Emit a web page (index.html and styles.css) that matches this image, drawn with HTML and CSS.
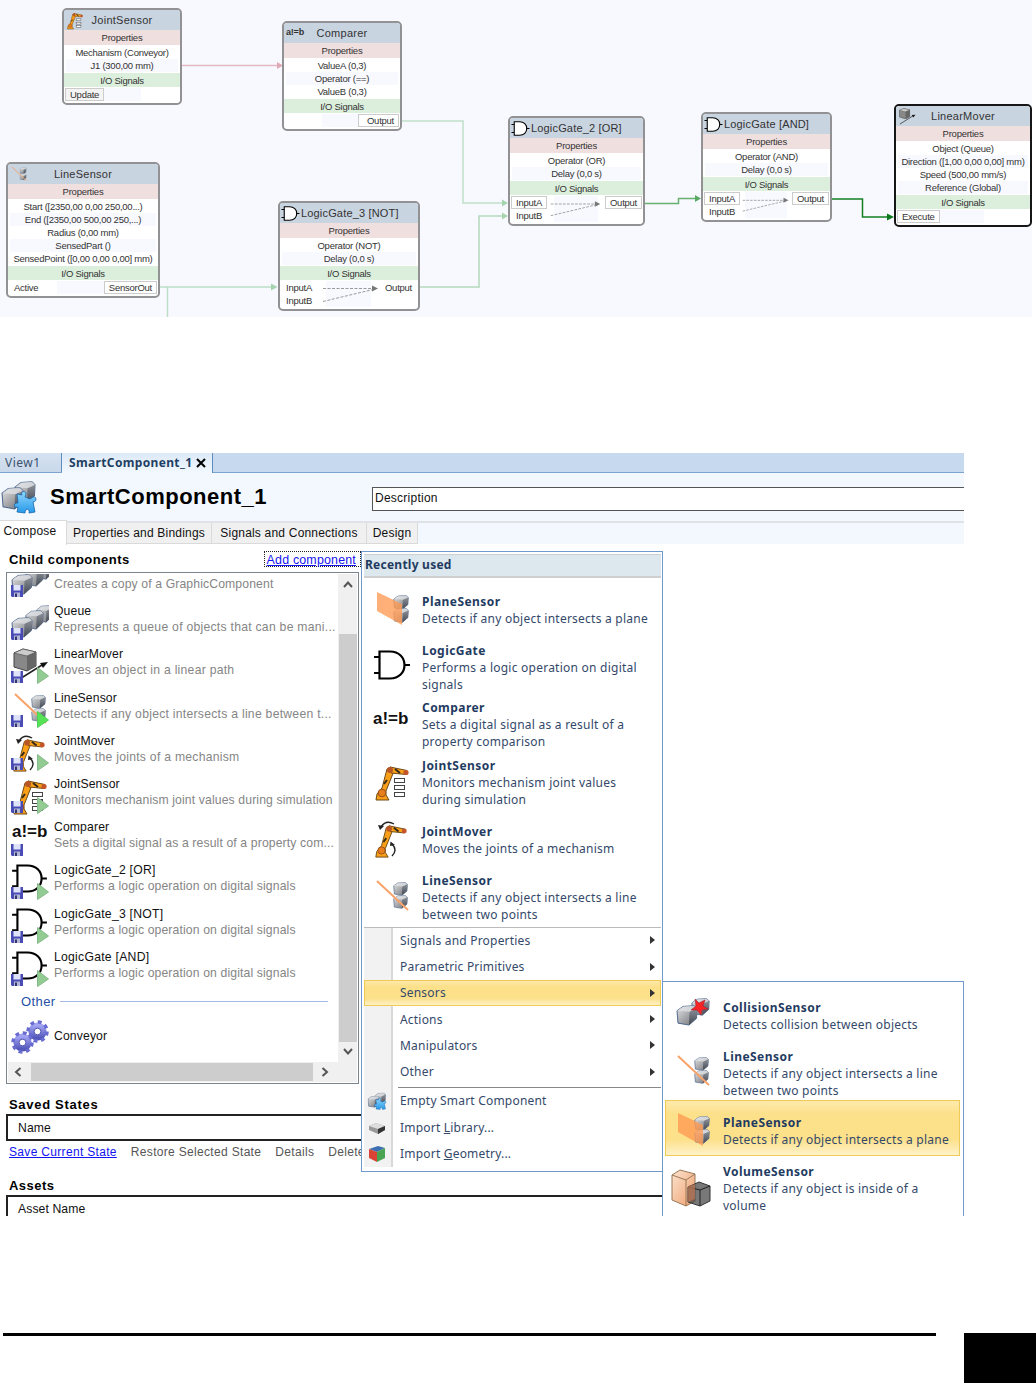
FILE: index.html
```html
<!DOCTYPE html>
<html lang="en">
<head>
    <meta charset="UTF-8" />
    <meta name="viewport" content="width=device-width, initial-scale=1.0"/>
    <title>SmartComponent_1</title>
    <link rel="stylesheet" href="styles.css">
</head>
<body>

<!-- Icon library -->
<svg class="defs" width="0" height="0">
    <defs>
        <linearGradient id="g-front" x1="0" y1="0" x2="1" y2="1"><stop offset="0" stop-color="#e4e4e5"/><stop offset="1" stop-color="#6b6d72"/></linearGradient>
        <linearGradient id="g-side" x1="0" y1="0" x2="0" y2="1"><stop offset="0" stop-color="#8c9098"/><stop offset="1" stop-color="#434a55"/></linearGradient>
        <linearGradient id="g-puzzle" x1="0" y1="0" x2="0" y2="1"><stop offset="0" stop-color="#8fd6fb"/><stop offset="1" stop-color="#2699ea"/></linearGradient>
        <linearGradient id="g-gear" x1="0" y1="0" x2="0" y2="1"><stop offset="0" stop-color="#a3a5f3"/><stop offset="1" stop-color="#5558bb"/></linearGradient>
        <linearGradient id="g-peach" x1="0" y1="0" x2="1" y2="1"><stop offset="0" stop-color="#fbe3d0"/><stop offset="1" stop-color="#ef9f6c"/></linearGradient>
        <symbol id="box" viewBox="0 0 22 22" preserveAspectRatio="none">
            <path d="M1 6 L7 1.5 L18 .8 L21 3.5 L20.5 14 L13 21 L2 19Z" fill="url(#g-front)" stroke="#4c658c" stroke-width="1"/>
            <path d="M13.5 7 L21 3.5 L20.5 14 L13 21Z" fill="url(#g-side)"/>
            <path d="M1 6 L7 1.5 L18 .8 L21 3.5 L13.5 7Z" fill="#dfe1e4" opacity=".75"/>
        </symbol>
        <symbol id="floppy" viewBox="0 0 12 12">
            <path d="M0 0H12V12H1L0 11Z" fill="#4a4cb5"/>
            <rect x="2.5" y="0" width="7" height="5.5" fill="#dfe3fa"/>
            <rect x="3" y="7.5" width="6" height="4.5" fill="#b4b8d6"/>
            <rect x="4" y="8.5" width="2" height="3.5" fill="#33356f"/>
        </symbol>
        <symbol id="play" viewBox="0 0 12 17"><path d="M.5 .5 L11.5 9 L.5 16.5Z" fill="#93cc93" stroke="#86b98a"/></symbol>
        <symbol id="arm" viewBox="0 0 38 38">
            <path d="M4 30 L9 24 L14 5 L18 3 L21 7 L13 27 L13 31 L16 36 H3Z" fill="#f99f18" stroke="#6e4a16" stroke-width="1"/>
            <path d="M17 3 L34 6.5 L33 10.5 L18 9Z" fill="#f99f18" stroke="#6e4a16" stroke-width="1"/>
            <path d="M22 5 L27 9 M11 20 L14 16" stroke="#332a1c" stroke-width="2"/>
            <circle cx="17" cy="6" r="3" fill="#b85725"/><circle cx="33" cy="8.5" r="2.6" fill="#c4552a"/><circle cx="9" cy="29" r="3.8" fill="#e67f1c" stroke="#9b4e1d"/>
        </symbol>
        <symbol id="joint-sensor" viewBox="0 0 38 38">
            <use href="#arm" width="38" height="38"/>
            <g fill="#fff" stroke="#444" stroke-width="1"><rect x="21.500" y="14.500" width="10" height="4"/><rect x="21.500" y="21.500" width="10" height="4"/><rect x="21.500" y="28.500" width="10" height="4"/></g>
        </symbol>
        <symbol id="joint-mover" viewBox="0 0 38 38">
            <use href="#arm" y="2" width="36" height="36"/>
            <g fill="none" stroke="#222" stroke-width="1.400"><path d="M21 3 Q13 -1.500 8 6"/><path d="M19 35 Q25 29 19 23"/></g>
            <path d="M5 4 L11 5 L7 9Z M17 25 L17.500 20.500 L22 24Z" fill="#222"/>
        </symbol>
        <symbol id="gate" viewBox="0 0 38 30">
            <path d="M6.500 1.500 H17 C26 1.500 31.500 7.500 31.500 15 C31.500 22.500 26 28.500 17 28.500 H6.500Z" fill="#fff" stroke="#000" stroke-width="2.200"/>
            <path d="M1 7H6 M1 23H6 M31 15H37" stroke="#000" stroke-width="2.200"/>
        </symbol>
        <symbol id="line-sensor" viewBox="0 0 38 38">
            <use href="#box" x="20" y="3" width="15" height="14"/><use href="#box" x="20" y="16" width="15" height="14"/>
            <path d="M4 2 L35 31" stroke="#f8a369" stroke-width="2"/>
        </symbol>
        <symbol id="plane-sensor" viewBox="0 0 38 38">
            <use href="#box" x="20" y="4" width="16" height="15"/><use href="#box" x="20" y="17" width="16" height="15"/>
            <path d="M4 1 L29 13 V34 L4 20Z" fill="#ff9a52" opacity=".78"/>
        </symbol>
        <symbol id="cube" viewBox="0 0 24 24">
            <path d="M1 5 L10 1 L23 4 V18 L14 23 L1 19Z" fill="#888" stroke="#444"/>
            <path d="M1 5 L10 1 L23 4 L14 8Z" fill="#ccc" stroke="#555" stroke-width=".7"/>
            <path d="M14 8 L23 4 V18 L14 23Z" fill="#666"/>
        </symbol>
        <symbol id="linear-mover" viewBox="0 0 38 38">
            <use href="#cube" x="2" y="0" width="24" height="24"/>
            <path d="M4 34 L31 17" stroke="#222" stroke-width="1.500"/><path d="M37 14 L29 15 L32 20Z" fill="#111"/>
        </symbol>
        <symbol id="queue" viewBox="0 0 38 38">
            <use href="#box" x="25" y="0" width="17" height="18"/><use href="#box" x="14" y="5" width="19" height="20"/><use href="#box" x="0" y="12" width="22" height="21"/>
        </symbol>
        <symbol id="smart" viewBox="0 0 38 34">
            <use href="#box" x="14" y="1" width="22" height="23"/><use href="#box" x="1" y="7" width="23" height="23"/>
            <path d="M17 14 L22 15 C20 11 26 10 26 14 L25 17 L30 19 L33 17 C37 16 37 22 33 22 L35 32 L29 33 C30 28 25 28 25 33 L17 32 L18 27 C13 29 13 22 18 23Z" fill="url(#g-puzzle)" stroke="#1766ab" stroke-width=".8"/>
        </symbol>
        <symbol id="gear" viewBox="-12 -12 24 24">
            <circle r="6.500" fill="none" stroke="url(#g-gear)" stroke-width="6"/>
            <circle r="10" fill="none" stroke="#686bcf" stroke-width="3.500" stroke-dasharray="4 3.850"/>
            <circle r="3.500" fill="none" stroke="#5356b2" stroke-width="1"/>
        </symbol>
        <symbol id="collision" viewBox="0 0 38 38">
            <use href="#box" x="17" y="1" width="19" height="18"/><use href="#box" x="2" y="8" width="22" height="21"/>
            <path d="M21 2 L25 6 L31 3 L29 9 L34 12 L28 13 L27 18 L23 13 L17 13 L22 9Z" fill="#f72324" stroke="#9d2330" stroke-width=".6"/>
        </symbol>
        <symbol id="volume" viewBox="0 0 40 40">
            <path d="M1 6 L9 1 L24 5 V32 L15 37 L1 31Z" fill="url(#g-peach)" stroke="#9a7957"/>
            <path d="M1 6 L15 11 L24 5 M15 11 V37" fill="none" stroke="#9a7957"/>
            <path d="M17 18 L28 13 L39 17 V32 L29 37 L17 33Z" fill="#444" fill-opacity=".72" stroke="#333"/>
            <path d="M17 18 L29 21 L39 17 M29 21 V37" fill="none" stroke="#222"/>
            <path d="M17 17 L24 15 V30 L17 33Z" fill="#b87858" opacity=".75"/>
        </symbol>
    </defs>
</svg>

<div class="diagram">
    <svg class="wires" width="1032" height="317">
        <g fill="none" stroke-width="1.500">
            <path d="M182 65.500H278" stroke="#e3b9c2"/>
            <path d="M402 121H463V203H504" stroke="#bfdfc8"/>
            <path d="M160 287H273 M167.500 287V317" stroke="#bcdec6"/>
            <path d="M420 287H479V216H504" stroke="#b4d9bc"/>
            <path d="M645 203.500H678.500V198.500H697" stroke="#67b070"/>
            <path d="M832 199H862.500V217H890" stroke="#148023"/>
        </g>
        <path d="M277 62L283 65.500L277 69Z" fill="#dfaab5"/>
        <path d="M271 283.500L277.500 287L271 290.500Z" fill="#a6d4af"/>
        <path d="M502 199.500L508 203L502 206.500Z M502 212.500L508 216L502 219.500Z" fill="#a6d4af"/>
        <path d="M695 195L701 198.500L695 202Z" fill="#5aaa64"/>
        <path d="M887 213.500L894 217L887 220.500Z" fill="#0d7a1c"/>
    </svg>

    <div class="node n-joint">
        <div class="node-title"><svg class="node-icon"><use href="#joint-sensor"/></svg>JointSensor</div>
        <div class="node-sub props">Properties</div>
        <div class="node-rows"><p>Mechanism (Conveyor)</p><p>J1 (300,00 mm)</p></div>
        <div class="node-sub io">I/O Signals</div>
        <div class="ports"><span class="port boxed gray">Update</span></div>
    </div>
    <div class="node n-comparer">
        <div class="node-title"><b class="node-ab">a!=b</b>Comparer</div>
        <div class="node-sub props">Properties</div>
        <div class="node-rows"><p>ValueA (0,3)</p><p>Operator (==)</p><p>ValueB (0,3)</p></div>
        <div class="node-sub io">I/O Signals</div>
        <div class="ports"><span></span><span class="port boxed out">Output</span></div>
    </div>
    <div class="node n-line">
        <div class="node-title"><svg class="node-icon"><use href="#line-sensor"/></svg>LineSensor</div>
        <div class="node-sub props">Properties</div>
        <div class="node-rows"><p>Start ([2350,00 0,00 250,00...)</p><p>End ([2350,00 500,00 250,...)</p><p>Radius (0,00 mm)</p><p>SensedPart ()</p><p>SensedPoint ([0,00 0,00 0,00] mm)</p></div>
        <div class="node-sub io">I/O Signals</div>
        <div class="ports"><span class="port">Active</span><span class="port boxed">SensorOut</span></div>
    </div>
    <div class="node gate-node n-not">
        <div class="node-title"><svg class="gate-icon"><use href="#gate"/></svg>LogicGate_3 [NOT]</div>
        <div class="node-sub props">Properties</div>
        <div class="node-rows"><p>Operator (NOT)</p><p>Delay (0,0 s)</p></div>
        <div class="node-sub io">I/O Signals</div>
        <div class="ports"><span class="port">InputA</span><span class="port">Output</span></div>
        <div class="ports"><span class="port">InputB</span></div>
        <svg class="dashes" viewBox="0 0 60 20"><path d="M2 5H52 M2 18L52 6"/><path class="tip" d="M51 2L57 5L51 8Z"/></svg>
    </div>
    <div class="node gate-node n-or">
        <div class="node-title"><svg class="gate-icon"><use href="#gate"/></svg>LogicGate_2 [OR]</div>
        <div class="node-sub props">Properties</div>
        <div class="node-rows"><p>Operator (OR)</p><p>Delay (0,0 s)</p></div>
        <div class="node-sub io">I/O Signals</div>
        <div class="ports"><span class="port boxed">InputA</span><span class="port boxed">Output</span></div>
        <div class="ports"><span class="port">InputB</span></div>
        <svg class="dashes" viewBox="0 0 60 20"><path d="M2 5H52 M2 18L52 6"/><path class="tip" d="M51 2L57 5L51 8Z"/></svg>
    </div>
    <div class="node gate-node n-and">
        <div class="node-title"><svg class="gate-icon"><use href="#gate"/></svg>LogicGate [AND]</div>
        <div class="node-sub props">Properties</div>
        <div class="node-rows"><p>Operator (AND)</p><p>Delay (0,0 s)</p></div>
        <div class="node-sub io">I/O Signals</div>
        <div class="ports"><span class="port boxed">InputA</span><span class="port boxed">Output</span></div>
        <div class="ports"><span class="port">InputB</span></div>
        <svg class="dashes" viewBox="0 0 60 20"><path d="M2 5H52 M2 18L52 6"/><path class="tip" d="M51 2L57 5L51 8Z"/></svg>
    </div>
    <div class="node n-mover">
        <div class="node-title"><svg class="node-icon"><use href="#linear-mover"/></svg>LinearMover</div>
        <div class="node-sub props">Properties</div>
        <div class="node-rows"><p>Object (Queue)</p><p>Direction ([1,00 0,00 0,00] mm)</p><p>Speed (500,00 mm/s)</p><p>Reference (Global)</p></div>
        <div class="node-sub io">I/O Signals</div>
        <div class="ports"><span class="port boxed">Execute</span></div>
    </div>
</div>

<div class="window">
    <div class="doc-tabs">
        <span class="doc-tab">View1</span>
        <span class="doc-tab active">SmartComponent_1<svg width="10" height="10"><path d="M1 1L9 9M9 1L1 9" stroke="#000" stroke-width="2"/></svg></span>
    </div>
    <div class="header">
        <svg class="header-icon"><use href="#smart"/></svg>
        <h1>SmartComponent_1</h1>
        <div class="description">Description</div>
    </div>
    <div class="tabs">
        <span class="tab active">Compose</span>
        <span class="tab t-props">Properties and Bindings</span>
        <span class="tab t-signals">Signals and Connections</span>
        <span class="tab t-design">Design</span>
    </div>

    <div class="compose">
        <div class="section-head"><b>Child components</b><a class="add">Add component</a></div>
        <div class="list">
            <div class="list-main">
                <div class="items">
                    <div class="item">
                        <div class="icon"><svg class="pic"><use href="#queue"/></svg><svg class="floppy"><use href="#floppy"/></svg></div>
                        <div class="label first"><small>Creates a copy of a GraphicComponent</small></div>
                    </div>
                    <div class="item">
                        <div class="icon"><svg class="pic"><use href="#queue"/></svg><svg class="floppy"><use href="#floppy"/></svg></div>
                        <div class="label"><span>Queue</span><small class="wide">Represents a queue of objects that can be mani...</small></div>
                    </div>
                    <div class="item">
                        <div class="icon"><svg class="pic"><use href="#linear-mover"/></svg><svg class="floppy"><use href="#floppy"/></svg><svg class="play"><use href="#play"/></svg></div>
                        <div class="label"><span>LinearMover</span><small class="wide">Moves an object in a linear path</small></div>
                    </div>
                    <div class="item">
                        <div class="icon"><svg class="pic"><use href="#line-sensor"/></svg><svg class="floppy"><use href="#floppy"/></svg><svg class="play live"><use href="#play"/></svg></div>
                        <div class="label"><span>LineSensor</span><small class="wide">Detects if any object intersects a line between t...</small></div>
                    </div>
                    <div class="item">
                        <div class="icon"><svg class="pic"><use href="#joint-mover"/></svg><svg class="floppy"><use href="#floppy"/></svg><svg class="play"><use href="#play"/></svg></div>
                        <div class="label"><span>JointMover</span><small class="wide">Moves the joints of a mechanism</small></div>
                    </div>
                    <div class="item">
                        <div class="icon"><svg class="pic"><use href="#joint-sensor"/></svg><svg class="floppy"><use href="#floppy"/></svg><svg class="play"><use href="#play"/></svg></div>
                        <div class="label"><span>JointSensor</span><small>Monitors mechanism joint values during simulation</small></div>
                    </div>
                    <div class="item">
                        <div class="icon"><b class="ab">a!=b</b><svg class="floppy"><use href="#floppy"/></svg></div>
                        <div class="label"><span>Comparer</span><small>Sets a digital signal as a result of a property com...</small></div>
                    </div>
                    <div class="item">
                        <div class="icon"><svg class="pic gate"><use href="#gate"/></svg><svg class="floppy"><use href="#floppy"/></svg><svg class="play"><use href="#play"/></svg></div>
                        <div class="label"><span class="wide">LogicGate_2 [OR]</span><small>Performs a logic operation on digital signals</small></div>
                    </div>
                    <div class="item">
                        <div class="icon"><svg class="pic gate"><use href="#gate"/></svg><svg class="floppy"><use href="#floppy"/></svg><svg class="play"><use href="#play"/></svg></div>
                        <div class="label"><span class="wide">LogicGate_3 [NOT]</span><small>Performs a logic operation on digital signals</small></div>
                    </div>
                    <div class="item">
                        <div class="icon"><svg class="pic gate"><use href="#gate"/></svg><svg class="floppy"><use href="#floppy"/></svg><svg class="play"><use href="#play"/></svg></div>
                        <div class="label"><span class="wide">LogicGate [AND]</span><small>Performs a logic operation on digital signals</small></div>
                    </div>
                    <div class="group"><span>Other</span></div>
                    <div class="item conveyor">
                        <div class="icon"><svg class="pic" viewBox="0 0 38 38"><use href="#gear" x="15" y="0" width="23" height="23"/><use href="#gear" x="0" y="11" width="23" height="23"/></svg></div>
                        <div class="label"><span>Conveyor</span></div>
                    </div>
                </div>
                <div class="vbar">
                    <svg width="10" height="7"><path d="M1 6L5 1.500L9 6" /></svg>
                    <div class="vthumb"></div>
                    <svg width="10" height="7"><path d="M1 1L5 5.500L9 1" /></svg>
                </div>
            </div>
            <div class="hbar">
                <svg width="8" height="10"><path d="M6.500 1L2 5L6.500 9" /></svg>
                <div class="hthumb"></div>
                <svg width="8" height="10"><path d="M1.500 1L6 5L1.500 9" /></svg>
            </div>
        </div>

        <div class="section-head saved"><b>Saved States</b></div>
        <div class="grid-head">Name</div>
        <div class="links"><a>Save Current State</a><span>Restore Selected State</span><span>Details</span><span>Delete</span></div>
        <div class="section-head assets"><b>Assets</b></div>
        <div class="grid-head">Asset Name</div>
    </div>

    <div class="menu">
        <div class="menu-title">Recently used</div>
        <div class="entry"><svg class="e-icon"><use href="#plane-sensor"/></svg><div><b>PlaneSensor</b><p>Detects if any object intersects a plane</p></div></div>
        <div class="entry"><svg class="e-icon gate"><use href="#gate"/></svg><div><b>LogicGate</b><p>Performs a logic operation on digital<br>signals</p></div></div>
        <div class="entry"><span class="e-icon ab">a!=b</span><div><b>Comparer</b><p>Sets a digital signal as a result of a<br>property comparison</p></div></div>
        <div class="entry"><svg class="e-icon"><use href="#joint-sensor"/></svg><div><b>JointSensor</b><p>Monitors mechanism joint values<br>during simulation</p></div></div>
        <div class="entry"><svg class="e-icon"><use href="#joint-mover"/></svg><div><b>JointMover</b><p>Moves the joints of a mechanism</p></div></div>
        <div class="entry"><svg class="e-icon"><use href="#line-sensor"/></svg><div><b>LineSensor</b><p>Detects if any object intersects a line<br>between two points</p></div></div>
        <div class="commands">
            <div class="cmd sub">Signals and Properties</div>
            <div class="cmd sub">Parametric Primitives</div>
            <div class="cmd sub selected">Sensors</div>
            <div class="cmd sub">Actions</div>
            <div class="cmd sub">Manipulators</div>
            <div class="cmd sub">Other</div>
            <hr>
            <div class="cmd"><svg class="c-icon"><use href="#smart"/></svg>Empty Smart Component</div>
            <div class="cmd"><svg class="c-icon" viewBox="0 0 20 20"><path d="M2 8L9 5L18 8L18 12L11 16L2 12Z" fill="#999"/><path d="M2 8L9 5L18 8L11 11Z" fill="#ddd"/><path d="M11 11L18 8V12L11 16Z" fill="#333"/></svg><span>Import <u>L</u>ibrary...</span></div>
            <div class="cmd"><svg class="c-icon" viewBox="0 0 20 20"><path d="M2 5L11 2L18 4L10 8Z" fill="#3c6fb0"/><path d="M2 5L10 8V18L2 14Z" fill="#d94436"/><path d="M10 8L18 4V14L10 18Z" fill="#4aa350"/></svg><span>Import <u>G</u>eometry...</span></div>
        </div>
    </div>

    <div class="menu submenu">
        <div class="entry"><svg class="e-icon"><use href="#collision"/></svg><div><b>CollisionSensor</b><p>Detects collision between objects</p></div></div>
        <div class="entry"><svg class="e-icon"><use href="#line-sensor"/></svg><div><b>LineSensor</b><p>Detects if any object intersects a line<br>between two points</p></div></div>
        <div class="entry selected"><svg class="e-icon"><use href="#plane-sensor"/></svg><div><b>PlaneSensor</b><p>Detects if any object intersects a plane</p></div></div>
        <div class="entry"><svg class="e-icon vol"><use href="#volume"/></svg><div><b>VolumeSensor</b><p>Detects if any object is inside of a<br>volume</p></div></div>
    </div>
</div>

<div class="footer">
    <div class="rule"></div>
    <div class="page-mark"></div>
</div>

</body>
</html>
```
FILE: styles.css
```css
* {
    box-sizing: border-box;
}
body {
    margin: 0;
    width: 1036px;
    height: 1383px;
    overflow: hidden;
    background: #fff;
    color: #111;
    font-family: "Liberation Sans", Arial, sans-serif;
    display: flex;
    flex-direction: column;
}
p {
    margin: 0;
}
.defs {
    position: absolute;
}

/* Diagram */
.diagram {
    position: relative;
    flex: none;
    width: 1032px;
    height: 317px;
    background: #f8f9ff;
    overflow: hidden;
}
.wires {
    position: absolute;
    left: 0;
    top: 0;
}
.node {
    position: absolute;
    border: 2px solid #929294;
    border-radius: 5px;
    background: #fff;
    font-size: 9.5px;
    line-height: 13px;
    color: #333;
    text-align: center;
    white-space: nowrap;
    letter-spacing: -0.25px;
}
.n-joint { left: 62px; top: 8px; width: 120px; height: 97px; }
.n-comparer { left: 282px; top: 21px; width: 120px; height: 110px; }
.n-line { left: 6px; top: 162px; width: 154px; height: 136px; }
.n-not { left: 278px; top: 201px; width: 142px; height: 110px; }
.n-or { left: 508px; top: 116px; width: 137px; height: 110px; }
.n-and { left: 701px; top: 112px; width: 131px; height: 110px; }
.n-mover { left: 894px; top: 104px; width: 138px; height: 123px; border-color: #161616; }
.node-title {
    height: 20px;
    line-height: 21px;
    background: #c9d4e1;
    border-radius: 3px 3px 0 0;
    font-size: 11px;
    letter-spacing: 0.25px;
    position: relative;
}
.gate-node .node-title {
    padding-left: 21px;
    text-align: left;
    letter-spacing: 0.17px;
}
.node-icon {
    position: absolute;
    left: 2px;
    top: 2px;
    width: 18px;
    height: 18px;
}
.gate-icon {
    position: absolute;
    left: 1px;
    top: 3px;
    width: 19px;
    height: 15px;
}
.node-ab {
    position: absolute;
    left: 2px;
    top: -1px;
    font-size: 9px;
    letter-spacing: -0.2px;
}
.node-sub {
    height: 15px;
    line-height: 16px;
    background: #f0dfdf;
}
.io {
    height: 14px;
    line-height: 15px;
    background: #dcefdd;
    margin-bottom: 1px;
}
.node-rows {
    padding: 1px 0;
}
.node-rows p {
    margin: 0 2px;
    height: 13px;
}
.node-rows p:nth-child(even) {
    background: #f8f9ff;
}
.ports {
    display: flex;
    justify-content: space-between;
    height: 13px;
    padding: 0 1px;
    background: linear-gradient(90deg, #fff 33%, #f8f9ff 33%, #f8f9ff 66%, #fff 66%);
}
.port {
    padding: 0 4px;
    border: 1px solid transparent;
    line-height: 12px;
    height: 13px;
}
.boxed {
    border-color: #ccc;
    background: #fff;
}
.gray {
    background: #f4f4f4;
}
.out {
    padding-left: 8px;
}
.dashes {
    position: absolute;
    left: 41px;
    bottom: 4px;
    width: 60px;
    height: 23px;
}
.n-or .dashes { left: 39px; width: 54px; }
.n-and .dashes { left: 38px; width: 50px; }
.dashes path {
    fill: none;
    stroke: #999;
    stroke-dasharray: 3 1.5;
}
.dashes .tip {
    fill: #777;
    stroke: none;
}

/* Station window */
.window {
    position: relative;
    flex: none;
    width: 964px;
    height: 763px;
    margin-top: 136px;
    overflow: hidden;
    background: #fff;
    font-size: 13px;
    white-space: nowrap;
}
.doc-tabs {
    display: flex;
    height: 20px;
    background: #c7d9ee;
    border-bottom: 1px solid #7da3cf;
    font: 12px/19px "Noto Sans", "Open Sans", sans-serif;
    color: #3c5370;
}
.doc-tab {
    width: 62px;
    padding-left: 5px;
    background: linear-gradient(#d5e2f1, #c9d8ea);
    border-right: 1px solid #5f8cc0;
    letter-spacing: 0.5px;
}
.doc-tab.active {
    width: 151px;
    height: 20px;
    padding-left: 7px;
    background: linear-gradient(#dce9f7, #f2f8fe);
    font-weight: bold;
    letter-spacing: 0.35px;
    color: #1f3f63;
}
.doc-tab svg {
    margin-left: 4px;
    vertical-align: -1px;
}
.header {
    display: flex;
    align-items: center;
    height: 48px;
    background: #f3f8fe;
}
.header-icon {
    width: 38px;
    height: 34px;
    margin-top: -1px;
}
h1 {
    width: 322px;
    margin: 0 0 0 12px;
    font-size: 22px;
    line-height: 28px;
    letter-spacing: 0.5px;
    color: #000;
}
.description {
    flex: 1;
    height: 24px;
    margin-top: 3px;
    border: 1px solid #555;
    border-right: 0;
    background: #fff;
    padding-left: 2px;
    font-size: 12px;
    line-height: 21px;
    letter-spacing: 0.25px;
}
.tabs {
    display: flex;
    align-items: flex-end;
    height: 23px;
    background: #f3f8fe;
    border-top: 2px solid #e0e3e6;
    font-size: 12px;
    letter-spacing: 0.2px;
}
.tab {
    height: 21px;
    line-height: 21px;
    background: #f0f0f0;
    border: 1px solid #dadada;
    border-width: 0 1px 1px 0;
    text-align: center;
}
.tab.active {
    width: 67px;
    height: 25px;
    margin-bottom: -1px;
    padding-right: 6px;
    border-width: 1px 1px 0 0;
    background: #fff;
    position: relative;
}
.t-props { width: 145px; }
.t-signals { width: 155px; }
.t-design { width: 51px; }

.compose {
    padding-left: 6px;
    font-size: 12.2px;
}
.section-head {
    display: flex;
    justify-content: space-between;
    width: 355px;
    height: 28px;
    padding: 7px 0 0 3px;
    line-height: 17px;
    font-size: 13px;
    letter-spacing: 0.45px;
    color: #000;
}
.add {
    height: 16px;
    line-height: 16px;
    padding: 0 4px 0 2px;
    border: 1px dotted #222;
    color: #1414f0;
    text-decoration: underline;
    font-size: 12.4px;
    letter-spacing: 0.2px;
}
.list {
    width: 353px;
    height: 512px;
    border: 1px solid #7c848e;
    padding: 1px;
}
.list-main {
    display: flex;
    height: 488px;
    overflow: hidden;
}
.items {
    width: 330px;
    padding-left: 3px;
    margin-top: -14px;
}
.item {
    display: flex;
    height: 43.2px;
}
.icon {
    position: relative;
    flex: none;
    width: 38px;
    height: 38px;
    margin-top: 1px;
}
.pic {
    width: 38px;
    height: 38px;
    margin-top: 1px;
}
.pic.gate {
    width: 37px;
    height: 29px;
}
.floppy {
    position: absolute;
    left: 0;
    top: 24px;
    width: 12px;
    height: 12px;
}
.play {
    position: absolute;
    left: 26px;
    top: 20px;
    width: 12px;
    height: 17px;
}
.live {
    filter: saturate(2.5);
}
.ab {
    font: bold 17px/24px "Liberation Sans", Arial, sans-serif;
    color: #111;
}
.icon .ab {
    position: absolute;
    left: 1px;
    top: 0;
}
.label {
    padding: 0 0 0 5px;
    line-height: 16px;
}
.label.first {
    padding-top: 16px;
}
.label span,
.label small {
    display: block;
    font-size: 12.2px;
    letter-spacing: 0.13px;
}
.label small {
    color: #858585;
}
.label .wide {
    letter-spacing: 0.26px;
}
.group {
    display: flex;
    align-items: center;
    height: 19px;
    margin-bottom: 7px;
    padding-left: 10px;
    font-size: 13px;
    letter-spacing: 0.4px;
    color: #2450a4;
}
.group::after {
    content: "";
    width: 268px;
    height: 1px;
    margin-left: 4px;
    background: #a3b8e2;
}
.conveyor .label {
    padding-top: 10px;
}
.vbar {
    display: flex;
    flex-direction: column;
    align-items: center;
    width: 19px;
    padding: 7px 0;
    background: #f0f0f0;
}
.vthumb {
    width: 18px;
    height: 408px;
    margin: 46px 0 auto;
    background: #cdcdcd;
}
.vbar path,
.hbar path {
    fill: none;
    stroke: #555;
    stroke-width: 2;
}
.hbar {
    display: flex;
    align-items: center;
    height: 20px;
    padding: 0 28px 0 6px;
    background: #f0f0f0;
}
.hthumb {
    width: 282px;
    height: 18px;
    margin: 0 auto 0 9px;
    background: #cdcdcd;
}
.saved {
    height: 30px;
    padding-top: 12px;
    letter-spacing: 0.7px;
}
.grid-head {
    height: 27px;
    border: 2px solid #222;
    border-right: 0;
    padding-left: 10px;
    line-height: 25px;
    letter-spacing: 0.1px;
}
.links {
    display: flex;
    gap: 14px;
    height: 25px;
    padding-left: 3px;
    line-height: 23px;
    font-size: 12px;
    letter-spacing: 0.32px;
    color: #555;
}
.links a {
    color: #1414f0;
    text-decoration: underline;
}
.assets {
    height: 29px;
    padding-top: 11px;
}

/* Add component menu */
.menu {
    position: absolute;
    left: 361px;
    top: 98px;
    width: 302px;
    height: 621px;
    padding: 2px 1px 0 2px;
    border: 1px solid #6f9ace;
    background: #fff;
    font: 12px/17px "Noto Sans", "Open Sans", sans-serif;
    letter-spacing: 0.24px;
    color: #34496a;
}
.menu-title {
    height: 24px;
    margin-bottom: 3px;
    padding-left: 1px;
    background: #dde7ee;
    border: solid #cdcfd0;
    border-width: 1px 0 2px;
    line-height: 20px;
    font-weight: bold;
    color: #1f3b61;
}
.entry {
    display: flex;
    align-items: center;
    height: 57.6px;
    padding-left: 9px;
}
.entry b {
    color: #1f3b61;
    display: block;
    letter-spacing: 0.45px;
}
.e-icon {
    flex: none;
    width: 38px;
    height: 38px;
    margin-right: 11px;
}
.e-icon.gate {
    height: 30px;
    margin-top: -4px;
}
.e-icon.ab {
    height: 24px;
    margin-top: -11px;
    letter-spacing: 0;
}
.commands {
    position: relative;
    border-top: 1px solid #bbb;
    background: linear-gradient(90deg, #f2f2f2 27px, #d8d8d8 27px, #d8d8d8 29px, #fff 29px);
    letter-spacing: 0.2px;
}
.cmd {
    display: flex;
    align-items: center;
    height: 26.3px;
    padding-left: 36px;
    padding-bottom: 1px;
    position: relative;
}
.cmd.sub::after {
    content: "";
    margin: 0 6px 0 auto;
    border: solid transparent;
    border-width: 4px 0 4px 5px;
    border-left-color: #333;
}
.selected {
    background: linear-gradient(#fdebaf, #fce08a 25%, #fce08a 70%, #fff3cd);
    box-shadow: inset 0 0 0 1px #efcb55;
}
.c-icon {
    position: absolute;
    left: 3px;
    top: 3px;
    width: 20px;
    height: 20px;
}
.commands hr {
    height: 1px;
    margin: 2px 0 0 34px;
    border: 0;
    background: #888;
}
.submenu {
    left: 662px;
    top: 528px;
    height: 240px;
    padding-top: 5px;
    padding-right: 3px;
}
.entry.selected {
    height: 55.6px;
    margin: -2px 0 4px;
    padding-top: 6px;
}
.submenu .vol {
    width: 40px;
    height: 40px;
    margin-left: -3px;
    margin-right: 12px;
}

.footer {
    display: flex;
    justify-content: space-between;
    margin-top: 117px;
    height: 50px;
    padding-left: 3px;
}
.rule {
    width: 933px;
    height: 3px;
    background: #000;
}
.page-mark {
    width: 72px;
    height: 50px;
    background: #000;
}
```
